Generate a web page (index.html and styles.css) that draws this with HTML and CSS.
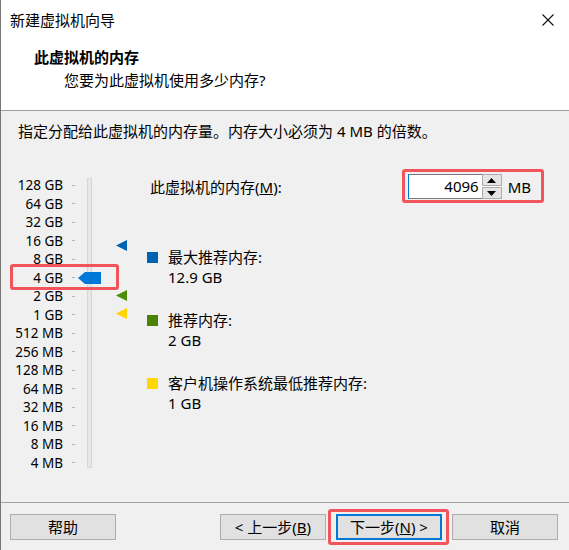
FILE: index.html
```html
<!DOCTYPE html>
<html lang="zh-CN">
<head>
<meta charset="utf-8">
<title>新建虚拟机向导</title>
<link rel="stylesheet" href="styles.css">
</head>
<body>
<div class="window">
  <div class="titlebar">
    <span class="title">新建虚拟机向导</span>
    <svg class="close" width="12" height="12" viewBox="0 0 12 12"><path d="M0.5 0.5 L11.5 11.5 M11.5 0.5 L0.5 11.5" stroke="#111" stroke-width="1.1" fill="none"/></svg>
  </div>
  <div class="header">
    <div class="h-title">此虚拟机的内存</div>
    <div class="h-sub">您要为此虚拟机使用多少内存?</div>
  </div>
  <div class="content">
    <div class="intro">指定分配给此虚拟机的内存量。内存大小必须为 4 MB 的倍数。</div>
    <div class="main">
      <div class="slider">
        <div class="scale">
          <div class="row"><span class="lbl">128 GB</span><span class="tick"></span></div>
          <div class="row"><span class="lbl">64 GB</span><span class="tick"></span></div>
          <div class="row"><span class="lbl">32 GB</span><span class="tick"></span></div>
          <div class="row"><span class="lbl">16 GB</span><span class="tick"></span></div>
          <div class="row"><span class="lbl">8 GB</span><span class="tick"></span></div>
          <div class="row"><span class="lbl">4 GB</span><span class="tick"></span></div>
          <div class="row"><span class="lbl">2 GB</span><span class="tick"></span></div>
          <div class="row"><span class="lbl">1 GB</span><span class="tick"></span></div>
          <div class="row"><span class="lbl">512 MB</span><span class="tick"></span></div>
          <div class="row"><span class="lbl">256 MB</span><span class="tick"></span></div>
          <div class="row"><span class="lbl">128 MB</span><span class="tick"></span></div>
          <div class="row"><span class="lbl">64 MB</span><span class="tick"></span></div>
          <div class="row"><span class="lbl">32 MB</span><span class="tick"></span></div>
          <div class="row"><span class="lbl">16 MB</span><span class="tick"></span></div>
          <div class="row"><span class="lbl">8 MB</span><span class="tick"></span></div>
          <div class="row"><span class="lbl">4 MB</span><span class="tick"></span></div>
        </div>
        <div class="track"></div>
        <svg class="thumb" width="23" height="12" viewBox="0 0 23 12"><polygon points="0,6 7,0 23,0 23,12 7,12" fill="#0078d7"/></svg>
        <svg class="marker m-max" width="11" height="11" viewBox="0 0 11 11"><polygon points="0,5.5 11,0 11,11" fill="#0063b1"/></svg>
        <svg class="marker m-rec" width="11" height="11" viewBox="0 0 11 11"><polygon points="0,5.5 11,0 11,11" fill="#4c8c0a"/></svg>
        <svg class="marker m-min" width="11" height="11" viewBox="0 0 11 11"><polygon points="0,5.5 11,0 11,11" fill="#ffd400"/></svg>
        <div class="annot annot-slider"></div>
      </div>
      <div class="right">
        <div class="mem-row">
          <span class="mem-label">此虚拟机的内存(<u>M</u>):</span>
          <div class="spin-group">
            <div class="spin-input">4096</div>
            <div class="spin-btns">
              <div class="spin-btn"><svg width="9" height="5" viewBox="0 0 9 5"><polygon points="0,5 4.5,0 9,5" fill="#000"/></svg></div>
              <div class="spin-btn"><svg width="9" height="5" viewBox="0 0 9 5"><polygon points="0,0 9,0 4.5,5" fill="#000"/></svg></div>
            </div>
            <span class="unit">MB</span>
            <div class="annot annot-input"></div>
          </div>
        </div>
        <div class="legend">
          <div class="item">
            <span class="sq sq-blue"></span>
            <div class="item-text"><div>最大推荐内存:</div><div>12.9 GB</div></div>
          </div>
          <div class="item">
            <span class="sq sq-green"></span>
            <div class="item-text"><div>推荐内存:</div><div>2 GB</div></div>
          </div>
          <div class="item">
            <span class="sq sq-yellow"></span>
            <div class="item-text"><div>客户机操作系统最低推荐内存:</div><div>1 GB</div></div>
          </div>
        </div>
      </div>
    </div>
  </div>
  <div class="footer">
    <div class="btn">帮助</div>
    <div class="spacer"></div>
    <div class="btn">&lt; 上一步(<u>B</u>)</div>
    <div class="btn btn-default">下一步(<u>N</u>) &gt;<div class="annot annot-next"></div></div>
    <div class="btn">取消</div>
  </div>
</div>
</body>
</html>
```

FILE: styles.css
```css
html, body {
  margin: 0;
  padding: 0;
}
body {
  width: 569px;
  height: 550px;
  overflow: hidden;
  background: #f0f0f0;
  font-family: "Noto Sans", "Noto Sans CJK SC", sans-serif;
  font-size: 15px;
  color: #000;
}
.window {
  width: 569px;
  height: 550px;
  box-sizing: border-box;
  border-left: 1px solid #767676;
  display: flex;
  flex-direction: column;
  background: #f0f0f0;
}
.titlebar {
  height: 40px;
  background: #fff;
  display: flex;
  align-items: center;
  justify-content: space-between;
  padding: 0 15px 0 9px;
  flex: none;
}
.title {
  line-height: 20px;
}
.close {
  display: block;
  margin-top: -1px;
}
.header {
  height: 71px;
  box-sizing: border-box;
  background: #fff;
  border-bottom: 1px solid #a0a0a0;
  padding: 7px 0 0 33px;
  flex: none;
}
.h-title {
  font-weight: bold;
  line-height: 20px;
}
.h-sub {
  line-height: 20px;
  margin-top: 3px;
  padding-left: 30px;
}
.content {
  flex: 1;
  padding-top: 10px;
}
.intro {
  line-height: 20px;
  padding-left: 17px;
}
.main {
  display: flex;
  margin-top: 35px;
}
.slider {
  position: relative;
  width: 146px;
  display: flex;
  flex: none;
}
.scale {
  display: flex;
  flex-direction: column;
}
.row {
  height: 18.5px;
  display: flex;
  align-items: center;
}
.lbl {
  width: 62px;
  text-align: right;
  font-size: 13.5px;
  line-height: 18px;
}
.tick {
  width: 3px;
  height: 1px;
  background: #b4b4b4;
  margin-left: 9px;
}
.track {
  width: 3px;
  height: 288px;
  margin-top: 2px;
  margin-left: 12px;
  background: #e7e7e7;
  border: 1px solid #d6d6d6;
}
.thumb {
  position: absolute;
  left: 77px;
  top: 96px;
}
.marker {
  position: absolute;
  left: 115px;
}
.m-max { top: 64px; }
.m-rec { top: 114px; }
.m-min { top: 132px; }
.annot {
  position: absolute;
  border: 3px solid #f2545b;
  border-radius: 3px;
  box-sizing: border-box;
  pointer-events: none;
}
.annot-slider {
  left: 9px;
  top: 88px;
  width: 109px;
  height: 26px;
}
.right {
  flex: 1;
}
.mem-row {
  display: flex;
  align-items: center;
  margin-top: -2px;
  height: 25px;
}
.mem-label {
  padding-left: 3px;
  line-height: 20px;
}
.spin-group {
  position: relative;
  margin-left: auto;
  margin-right: 38px;
  display: flex;
  align-items: center;
  height: 25px;
}
.spin-input {
  width: 74px;
  height: 25px;
  box-sizing: border-box;
  background: #fff;
  border-left: 1px solid #0078d7;
  border-top: 1px solid #7a7a7a;
  border-bottom: 1px solid #7a7a7a;
  text-align: right;
  padding-right: 3px;
  line-height: 23px;
}
.spin-btns {
  display: flex;
  flex-direction: column;
  width: 20px;
  height: 25px;
  background: #fff;
}
.spin-btn {
  height: 12px;
  box-sizing: border-box;
  border: 1px solid #adadad;
  background: #e5e5e5;
  display: flex;
  align-items: center;
  justify-content: center;
}
.spin-btn + .spin-btn {
  margin-top: 1px;
}
.spin-btn svg {
  display: block;
}
.unit {
  margin-left: 6px;
  line-height: 20px;
}
.annot-input {
  left: -6px;
  top: -5px;
  width: 142px;
  height: 34px;
}
.legend {
  margin-top: 48px;
  display: flex;
  flex-direction: column;
  gap: 23px;
}
.item {
  display: flex;
  align-items: flex-start;
}
.sq {
  width: 11px;
  height: 11px;
  margin-top: 5px;
  flex: none;
}
.sq-blue { background: #0063b1; }
.sq-green { background: #498205; }
.sq-yellow { background: #ffd800; }
.item-text {
  margin-left: 10px;
  line-height: 20px;
}
.footer {
  flex: none;
  height: 48px;
  box-sizing: border-box;
  border-top: 1px solid #a0a0a0;
  display: flex;
  align-items: flex-start;
  gap: 10px;
  padding: 11px 11px 0 9px;
}
.spacer {
  flex: 1;
}
.btn {
  position: relative;
  width: 106px;
  height: 26px;
  box-sizing: border-box;
  border: 1px solid #adadad;
  background: #e1e1e1;
  display: flex;
  align-items: center;
  justify-content: center;
  line-height: 20px;
}
.btn-default {
  border: 2px solid #0078d7;
}
.annot-next {
  left: -10px;
  top: -7px;
  width: 121px;
  height: 36px;
}
```
